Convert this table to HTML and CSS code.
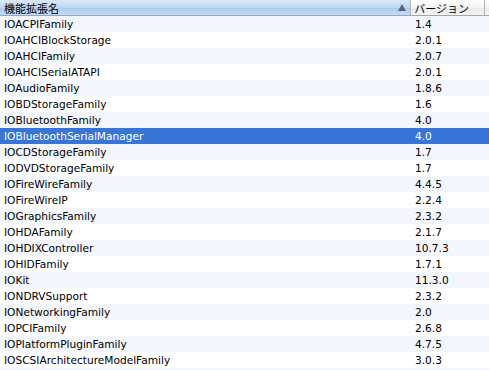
FILE: index.html
```html
<!DOCTYPE html>
<html lang="ja">
<head>
<meta charset="utf-8">
<link rel="stylesheet" href="styles.css">
</head>
<body>
<div class="table">
  <div class="head">
    <div class="hcell name sorted"><span>機能拡張名</span><span class="tri"></span></div>
    <div class="hcell ver">バージョン</div>
    <div class="hcell rest"></div>
  </div>
  <div class="rows">
    <div class="row"><div class="c1">IOACPIFamily</div><div class="c2">1.4</div></div>
    <div class="row"><div class="c1">IOAHCIBlockStorage</div><div class="c2">2.0.1</div></div>
    <div class="row"><div class="c1">IOAHCIFamily</div><div class="c2">2.0.7</div></div>
    <div class="row"><div class="c1">IOAHCISerialATAPI</div><div class="c2">2.0.1</div></div>
    <div class="row"><div class="c1">IOAudioFamily</div><div class="c2">1.8.6</div></div>
    <div class="row"><div class="c1">IOBDStorageFamily</div><div class="c2">1.6</div></div>
    <div class="row"><div class="c1">IOBluetoothFamily</div><div class="c2">4.0</div></div>
    <div class="row sel"><div class="c1">IOBluetoothSerialManager</div><div class="c2">4.0</div></div>
    <div class="row"><div class="c1">IOCDStorageFamily</div><div class="c2">1.7</div></div>
    <div class="row"><div class="c1">IODVDStorageFamily</div><div class="c2">1.7</div></div>
    <div class="row"><div class="c1">IOFireWireFamily</div><div class="c2">4.4.5</div></div>
    <div class="row"><div class="c1">IOFireWireIP</div><div class="c2">2.2.4</div></div>
    <div class="row"><div class="c1">IOGraphicsFamily</div><div class="c2">2.3.2</div></div>
    <div class="row"><div class="c1">IOHDAFamily</div><div class="c2">2.1.7</div></div>
    <div class="row"><div class="c1">IOHDIXController</div><div class="c2">10.7.3</div></div>
    <div class="row"><div class="c1">IOHIDFamily</div><div class="c2">1.7.1</div></div>
    <div class="row"><div class="c1">IOKit</div><div class="c2">11.3.0</div></div>
    <div class="row"><div class="c1">IONDRVSupport</div><div class="c2">2.3.2</div></div>
    <div class="row"><div class="c1">IONetworkingFamily</div><div class="c2">2.0</div></div>
    <div class="row"><div class="c1">IOPCIFamily</div><div class="c2">2.6.8</div></div>
    <div class="row"><div class="c1">IOPlatformPluginFamily</div><div class="c2">4.7.5</div></div>
    <div class="row"><div class="c1">IOSCSIArchitectureModelFamily</div><div class="c2">3.0.3</div></div>
    <div class="row"><div class="c1"></div><div class="c2"></div></div>
  </div>
</div>
</body>
</html>
```

FILE: styles.css
```css
html, body {
  margin: 0;
  padding: 0;
  background: #ffffff;
}
body {
  width: 489px;
  height: 370px;
  overflow: hidden;
  font-family: "DejaVu Sans", "Noto Sans CJK JP", sans-serif;
  font-size: 10.6px;
  color: #000;
}
.table {
  display: flex;
  flex-direction: column;
}
.head {
  display: flex;
  height: 16px;
  border-bottom: 1px solid #a5a5a5;
  box-sizing: border-box;
}
.hcell {
  display: flex;
  align-items: center;
  box-sizing: border-box;
  padding-left: 4px;
  font-size: 11px;
  font-family: "Noto Sans CJK JP", sans-serif;
  background: linear-gradient(#ffffff, #f3f3f3 50%, #e9e9e9 51%, #f4f4f4);
  border-right: 1px solid #b5b5b5;
}
.hcell.sorted {
  background: linear-gradient(#d9e8f8, #c0d7f2 50%, #abc9ef 51%, #c6dcf6);
  justify-content: space-between;
  padding-right: 4px;
}
.name { width: 412px; }
.ver { width: 74px; padding-left: 3px; }
.rest { flex: 1; border-right: none; }
.tri {
  width: 0;
  height: 0;
  border-left: 4px solid transparent;
  border-right: 4px solid transparent;
  border-bottom: 7px solid #53647a;
}
.row {
  display: flex;
  height: 16px;
  line-height: 16px;
  background: #f3f6fa;
}
.row:nth-child(even) { background: #ffffff; }
.row.sel { background: #3875d7; color: #fff; }
.c1 {
  width: 412px;
  padding-left: 4px;
  box-sizing: border-box;
  white-space: nowrap;
}
.c2 {
  padding-left: 3px;
}
```
